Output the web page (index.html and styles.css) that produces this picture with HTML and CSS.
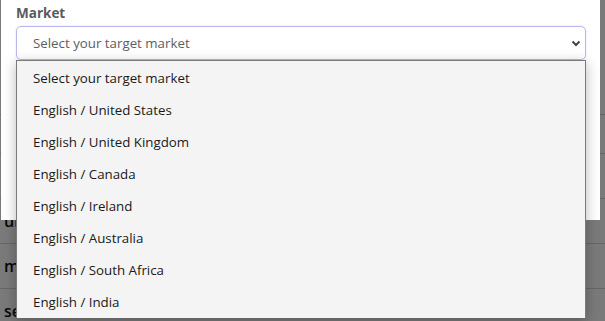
FILE: index.html
```html
<!DOCTYPE html>
<html>
<head>
<meta charset="utf-8">
<link rel="stylesheet" href="styles.css">
</head>
<body>
<div class="page">
  <div class="row row-a"></div>
  <div class="row row-b"></div>
  <div class="row row-c"></div>
  <div class="row"><span class="cell">ur</span></div>
  <div class="row"><span class="cell">m</span></div>
  <div class="row"><span class="cell">se</span></div>
</div>
<div class="backdrop"></div>
<div class="modal">
  <label class="label">Market</label>
  <div class="select">
    <span class="select-text">Select your target market</span>
    <svg class="chev" width="10" height="7" viewBox="0 0 10 7"><path d="M1.5 1.5 L5 5 L8.5 1.5" fill="none" stroke="#444" stroke-width="2"/></svg>
  </div>
  <ul class="list">
    <li class="opt">Select your target market</li>
    <li class="opt">English / United States</li>
    <li class="opt">English / United Kingdom</li>
    <li class="opt">English / Canada</li>
    <li class="opt">English / Ireland</li>
    <li class="opt">English / Australia</li>
    <li class="opt">English / South Africa</li>
    <li class="opt">English / India</li>
  </ul>
</div>
</body>
</html>
```
FILE: styles.css
```css
* { box-sizing: border-box; }
html, body { margin: 0; padding: 0; }
body {
  width: 605px;
  height: 321px;
  overflow: hidden;
  position: relative;
  background: #fff;
  font-family: "Open Sans", "Noto Sans", sans-serif;
}
.page {
  display: flex;
  flex-direction: column;
  padding-top: 76px;
}
.row {
  height: 45px;
  border-bottom: 1px solid #d6d6d6;
  padding-left: 4px;
  display: flex;
  align-items: center;
  font-size: 16px;
  color: #111;
  font-weight: 600;
}
.row-a { height: 39px; }
.row-b { height: 39px; }
.backdrop {
  position: absolute;
  inset: 0;
  background: rgba(0, 0, 0, 0.52);
}
.modal {
  position: absolute;
  top: 0;
  left: 1px;
  width: 599px;
  height: 220px;
  background: #fff;
  padding: 4px 15px 0 15px;
}
.label {
  display: block;
  font-size: 13.5px;
  font-weight: 700;
  color: #5a5a5a;
  line-height: 18px;
  margin-bottom: 4px;
}
.select {
  height: 34px;
  width: 570px;
  border: 1px solid #b9b9ee;
  border-radius: 5px;
  display: flex;
  align-items: center;
  justify-content: space-between;
  padding: 0 4px 0 16px;
  box-shadow: 0 0 2px rgba(120, 120, 230, 0.25);
}
.select-text {
  font-size: 13.3px;
  color: #5e5e5e;
}
.chev { display: block; margin-top: 1px; }
.list {
  position: absolute;
  top: 60px;
  left: 15px;
  width: 570px;
  margin: 0;
  padding: 1px 0 0 0;
  list-style: none;
  background: #f4f4f4;
  border: 1px solid #7a7a7a;
  border-bottom: none;
  box-shadow: 0 3px 12px rgba(0, 0, 0, 0.28);
}
.opt {
  height: 32px;
  line-height: 32px;
  padding-left: 16px;
  font-size: 13.3px;
  color: #1a1a1a;
}
```
